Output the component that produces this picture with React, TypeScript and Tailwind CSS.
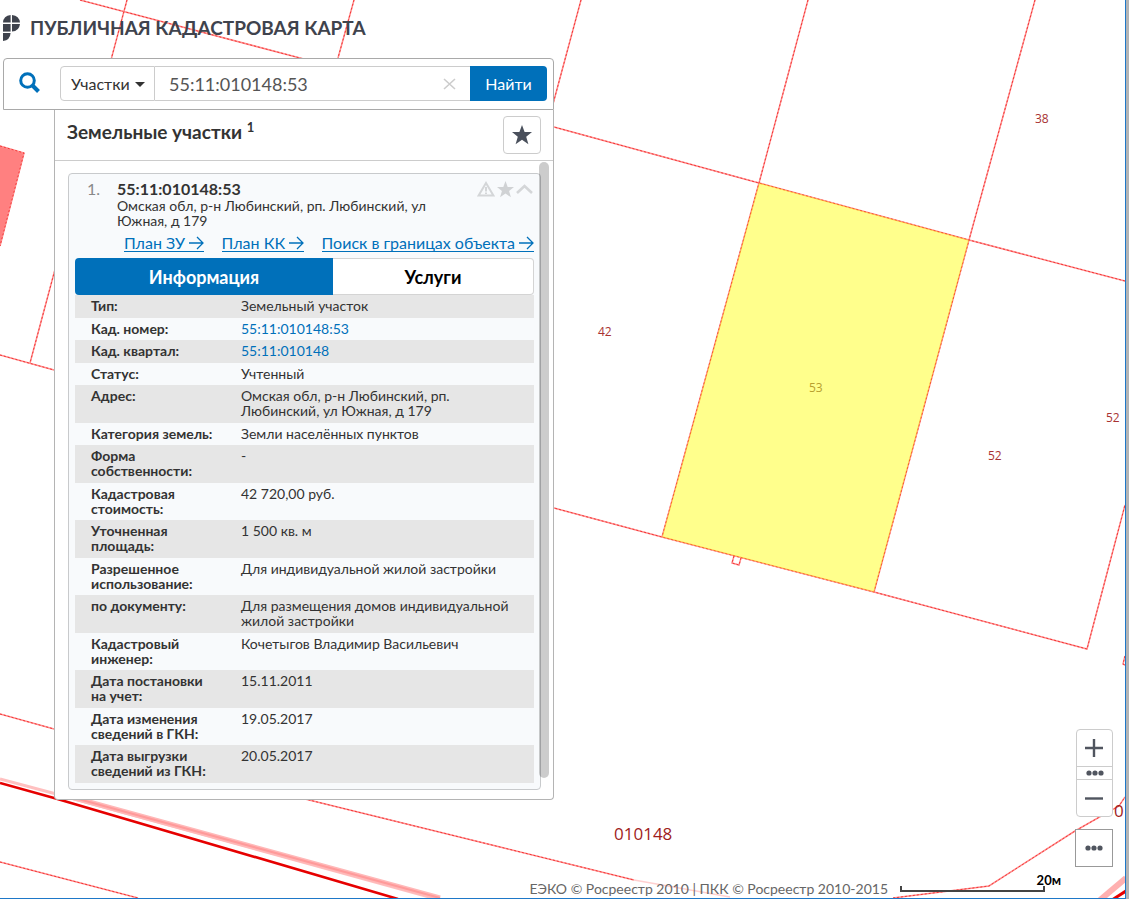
import { useState } from "react";

interface InfoRow {
  label: string;
  value: string;
  link?: boolean;
}

const rows: InfoRow[] = [
  { label: "Тип:", value: "Земельный участок" },
  { label: "Кад. номер:", value: "55:11:010148:53", link: true },
  { label: "Кад. квартал:", value: "55:11:010148", link: true },
  { label: "Статус:", value: "Учтенный" },
  { label: "Адрес:", value: "Омская обл, р-н Любинский, рп. Любинский, ул Южная, д 179" },
  { label: "Категория земель:", value: "Земли населённых пунктов" },
  { label: "Форма собственности:", value: "-" },
  { label: "Кадастровая стоимость:", value: "42 720,00 руб." },
  { label: "Уточненная площадь:", value: "1 500 кв. м" },
  { label: "Разрешенное использование:", value: "Для индивидуальной жилой застройки" },
  { label: "по документу:", value: "Для размещения домов индивидуальной жилой застройки" },
  { label: "Кадастровый инженер:", value: "Кочетыгов Владимир Васильевич" },
  { label: "Дата постановки на учет:", value: "15.11.2011" },
  { label: "Дата изменения сведений в ГКН:", value: "19.05.2017" },
  { label: "Дата выгрузки сведений из ГКН:", value: "20.05.2017" },
];

// parcel borders
const borders = [
  "M80 0 L300 58 L554 127 L759 183 L969 240 L1125 281",
  "M127 0 L30 363",
  "M354 0 L338 58",
  "M581 0 L553 104",
  "M808 0 L759 183 L662 537",
  "M1035 0 L969 240 L874 592",
  "M0 355 L54 370 L554 508 L662 537 L874 592 L1087 649 L1125 505",
  "M0 146 L24 153 L0 246",
  "M734 556 L732 563 L739 565 L741 558",
  "M1125 656 L1123 664 L1125 665",
  "M0 714 L54 729 L305 799 L500 847 L634 880",
  "M0 862 L138 898",
  "M893 898 L989 886 L1075 831 L1119 806 L1125 797",
];

const labels = [
  { text: "38", x: 1035, y: 123 },
  { text: "42", x: 598, y: 336 },
  { text: "52", x: 988, y: 460 },
  { text: "52", x: 1106, y: 422 },
];

function MapCanvas() {
  return (
    <svg
      className="absolute inset-0 h-full w-full"
      viewBox="0 0 1125 898"
      preserveAspectRatio="xMinYMin slice"
      fontFamily="'Open Sans', sans-serif"
    >
      <path d="M0 146 L24 153 L0 246 Z" fill="#ff8080" />
      <path d="M0 779 L60 795 L440 900" stroke="#ffc0c0" strokeWidth="3" fill="none" />
      <path d="M60 794 L440 898" stroke="#ffb8b8" strokeWidth="5" fill="none" />
      <path d="M60 794 L440 898" stroke="#ff9a9a" strokeWidth="2" fill="none" />
      <path d="M0 783 L54 798 L398 899" stroke="#e60000" strokeWidth="2.6" fill="none" />
      <path d="M1100 900 L1126 878" stroke="#ffb0b0" strokeWidth="6" fill="none" />
      <path d="M1112 900 L1126 891" stroke="#e60000" strokeWidth="3" fill="none" />
      {borders.map((d) => (
        <g key={d} fill="none">
          <path d={d} stroke="#ff8c8c" strokeWidth="1.5" />
          <path d={d} stroke="#f02020" strokeWidth="0.8" strokeDasharray="2 2" />
        </g>
      ))}
      <path d="M634 880 L730 897" stroke="#ffd0d0" strokeWidth="1.5" />
      <path d="M759 183 L969 240 L874 592 L662 537 Z" fill="#ffff00" fillOpacity="0.45" />
      {labels.map((l) => (
        <text key={l.x} x={l.x} y={l.y} fontSize="12" fill="#a83232">
          {l.text}
        </text>
      ))}
      <text x="809" y="392" fontSize="12" fill="#b8a030">
        53
      </text>
      <text x="614" y="840" fontSize="17" fill="#a01c1c">
        010148
      </text>
      <text x="1114" y="817" fontSize="17" fill="#a01c1c">
        0
      </text>
    </svg>
  );
}

function Logo() {
  return (
    <svg width="17" height="27" viewBox="0 0 17 27" fill="#3f434d">
      <path d="M0 7.6 Q0.4 0.8 7.6 0 V7.6 Z" />
      <path d="M9 7.6 V0 Q16.2 0.8 17 7.6 Z" />
      <path d="M0 9 H7.6 V16.6 H0 Z" />
      <path d="M9 9 H17 Q16.2 16 9 16.6 Z" />
      <path d="M0 18 H7.6 Q7.2 25 0 26 Z" />
    </svg>
  );
}

function Star({ size, color }: { size: number; color: string }) {
  return (
    <svg width={size} height={size} viewBox="0 0 20 20" fill={color}>
      <path d="M10 0 L12.6 7 H20 L14.2 11.7 L16.4 19.2 L10 14.8 L3.6 19.2 L5.8 11.7 L0 7 H7.4 Z" />
    </svg>
  );
}

function ArrowLink({ children }: { children: string }) {
  return (
    <a href="#" className="flex items-center gap-1 border-b border-[#0070ba] text-[16px] leading-4 text-[#0070ba]">
      {children}
      <svg width="15" height="14" viewBox="0 0 15 14" fill="none" stroke="#0070ba" strokeWidth="1.3">
        <path d="M0 7 H14 M8 1 L14 7 L8 13" />
      </svg>
    </a>
  );
}

function Dots() {
  return (
    <svg width="18" height="6" viewBox="0 0 18 6" fill="#50555f">
      <circle cx="3" cy="3" r="2.6" />
      <circle cx="9" cy="3" r="2.6" />
      <circle cx="15" cy="3" r="2.6" />
    </svg>
  );
}

function SearchBar() {
  const [query, setQuery] = useState("55:11:010148:53");

  return (
    <form
      className="flex h-[52px] items-center rounded-t-sm border border-[#a9a9a9] bg-white pr-1.5 pb-0.5"
      onSubmit={(e) => e.preventDefault()}
    >
      <div className="flex w-14 pl-[15px]">
        <svg width="22" height="22" viewBox="0 0 22 22" fill="none" stroke="#0070ba">
          <circle cx="8.5" cy="8.5" r="6.8" strokeWidth="3" />
          <path d="M13 13 L19.5 19.5" strokeWidth="4" />
        </svg>
      </div>
      <div className="relative h-[35px]">
        <select
          aria-label="Тип объекта"
          className="h-full w-[95px] appearance-none rounded-l-sm border border-[#ccc] bg-white pt-0.5 pl-2.5 text-[16px] text-[#333]"
        >
          <option>Участки</option>
        </select>
        <svg className="pointer-events-none absolute right-2.5 top-4" width="10" height="5" viewBox="0 0 10 5" fill="#333">
          <path d="M0 0 H10 L5 5 Z" />
        </svg>
      </div>
      <div className="relative h-[35px] flex-1">
        <input
          aria-label="Поиск"
          className="h-full w-full border-y border-[#ccc] pt-0.5 pl-3.5 text-[18px] text-[#555] outline-none"
          value={query}
          onChange={(e) => setQuery(e.target.value)}
        />
        <button type="button" aria-label="Очистить" className="absolute right-3.5 top-3" onClick={() => setQuery("")}>
          <svg width="13" height="12" viewBox="0 0 13 12" stroke="#ccc" strokeWidth="1.6">
            <path d="M1 1 L12 11 M12 1 L1 11" />
          </svg>
        </button>
      </div>
      <button className="h-[35px] w-[77px] rounded-r-sm bg-[#0070ba] pt-0.5 text-[16px] text-white">Найти</button>
    </form>
  );
}

function ParcelCard() {
  return (
    <article className="rounded-sm border border-[#c8cacc] bg-[#f8fafc] p-1.5 text-[#333]">
      <div className="flex">
        <span className="w-[42px] pl-3 text-[16px] leading-[18px] text-[#888]">1.</span>
        <div className="w-[320px] pb-px">
          <h3 className="text-[16px] font-bold leading-[18px]">55:11:010148:53</h3>
          <p className="text-[14px] leading-[15px]">Омская обл, р-н Любинский, рп. Любинский, ул Южная, д 179</p>
        </div>
        <div className="ml-auto flex h-[18px] items-center gap-0.5 pr-px">
          <svg width="18" height="16" viewBox="0 0 18 16" fill="none" stroke="#d4d6d8" strokeWidth="2">
            <path d="M9 2 L16.4 14.6 H1.6 Z" />
            <path d="M9 6 V10.5 M9 11.5 V13" />
          </svg>
          <Star size={17} color="#d0d2d4" />
          <svg width="17" height="10" viewBox="0 0 17 10" fill="none" stroke="#d4d6d8" strokeWidth="2.6">
            <path d="M1 9 L8.5 2 L16 9" />
          </svg>
        </div>
      </div>
      <div className="mt-1.5 flex justify-between pl-[49px]">
        <ArrowLink>План ЗУ</ArrowLink>
        <ArrowLink>План КК</ArrowLink>
        <ArrowLink>Поиск в границах объекта</ArrowLink>
      </div>
      <div className="mt-1.5 flex h-[37px] text-[18px] font-bold">
        <button className="w-[258px] rounded-l-sm bg-[#0070ba] pt-0.5 text-white">Информация</button>
        <button className="flex-1 rounded-r-sm border border-l-0 border-[#d4d4d4] bg-white pt-0.5 text-black">
          Услуги
        </button>
      </div>
      <table className="w-full text-left text-[14px] leading-[15px]">
        <tbody>
          {rows.map((row) => (
            <tr key={row.label} className="group align-top odd:bg-[#e6e6e6]">
              <th className="w-[166px] pt-[3px] pr-6 pb-1 pl-4 font-bold group-odd:pb-[5px]">{row.label}</th>
              <td className="pt-[3px] pr-6 pb-1 group-odd:pb-[5px]">
                {row.link ? (
                  <a href="#" className="text-[#0070ba]">
                    {row.value}
                  </a>
                ) : (
                  row.value
                )}
              </td>
            </tr>
          ))}
        </tbody>
      </table>
    </article>
  );
}

export default function App() {
  return (
    <div className="flex min-h-screen bg-[#b4b4b4] font-['Lato','Liberation_Sans',sans-serif]">
      <main className="relative flex-1 overflow-hidden border-r border-b border-[#1e78c8] bg-white">
        <MapCanvas />

        <div className="relative ml-[3px] w-[551px]">
          <header className="flex h-[58px] items-center gap-2.5 pb-0.5">
            <Logo />
            <h1 className="text-[19px] font-bold text-[#3f434d]">ПУБЛИЧНАЯ КАДАСТРОВАЯ КАРТА</h1>
          </header>
          <SearchBar />
          <section className="relative ml-[51px] rounded-b-sm border border-t-0 border-[#b4b4b4] bg-white">
            <div className="flex h-[51px] items-center justify-between border-b border-[#ccc] pr-3 pl-3">
              <h2 className="pb-1.5 text-[19px] font-bold text-[#333]">
                Земельные участки <sup className="text-[13px]">1</sup>
              </h2>
              <button
                aria-label="Избранное"
                className="flex h-[38px] w-[38px] items-center justify-center rounded-sm border border-[#ccc] bg-white"
              >
                <Star size={20} color="#4a505c" />
              </button>
            </div>
            <div className="pt-3 pr-3 pb-[9px] pl-[13px]">
              <ParcelCard />
            </div>
            <div className="absolute top-[52px] right-1 bottom-[21px] w-2.5 rounded-full bg-black/20" />
          </section>
        </div>

        <div className="absolute right-3 bottom-[31px] flex flex-col items-end gap-3">
          <div className="flex w-[37px] flex-col divide-y divide-[#ccc] rounded-sm border border-[#ccc] bg-white">
            <button aria-label="Приблизить" className="flex h-[37px] items-center justify-center">
              <svg width="19" height="18" viewBox="0 0 19 18" stroke="#50555f" strokeWidth="2.4">
                <path d="M9 0 V18 M0 9 H18" />
              </svg>
            </button>
            <button aria-label="Масштаб" className="flex h-[13px] items-center justify-center">
              <Dots />
            </button>
            <button aria-label="Отдалить" className="flex h-9 items-center justify-center">
              <svg width="19" height="3" viewBox="0 0 19 3" stroke="#50555f" strokeWidth="2.4">
                <path d="M0 1.5 H18" />
              </svg>
            </button>
          </div>
          <button
            aria-label="Ещё"
            className="flex h-[38px] w-[38px] items-center justify-center border border-[#999] bg-white"
          >
            <Dots />
          </button>
        </div>

        <footer className="absolute right-[80px] bottom-0 flex items-end gap-3">
          <p className="text-[14px] leading-[18px] text-[#666]">ЕЭКО © Росреестр 2010 | ПКК © Росреестр 2010-2015</p>
          <div className="relative pb-1.5">
            <div className="h-1.5 w-[145px] border-x-2 border-b-2 border-[#444]" />
            <span className="absolute -right-4 bottom-3 text-[13px] leading-3 font-bold text-black">20м</span>
          </div>
        </footer>
      </main>
      <div className="w-[3px]" />
    </div>
  );
}
